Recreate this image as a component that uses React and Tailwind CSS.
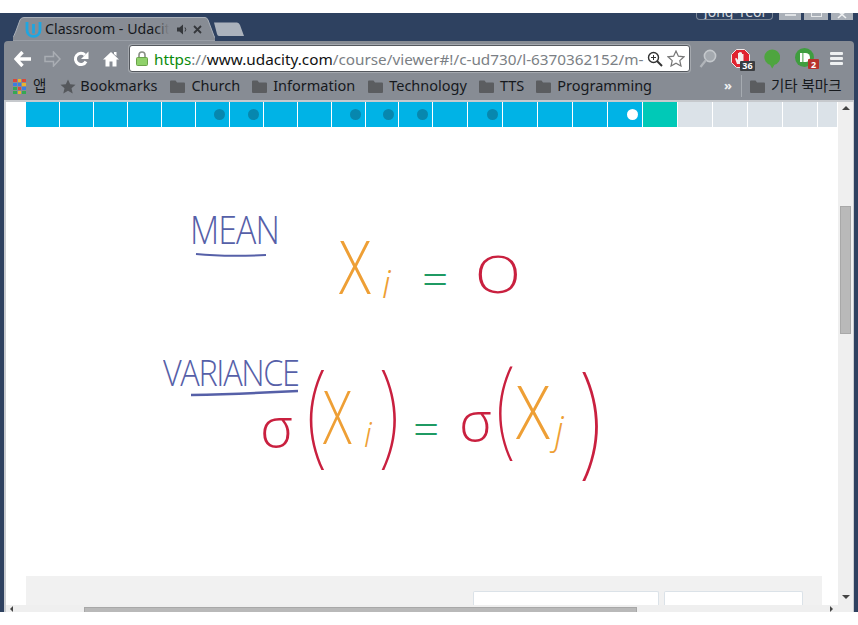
import React from "react";

const UI_FONT = "font-['Noto_Sans','Noto_Sans_CJK_KR',sans-serif]";

// progress bar across the top of the classroom page
const SEGMENTS = [
  { w: 34 }, { w: 34 }, { w: 34 }, { w: 34 }, { w: 34 },
  { w: 34, dot: "dark" }, { w: 34, dot: "dark" }, { w: 34 }, { w: 34 },
  { w: 34, dot: "dark" }, { w: 34, dot: "dark" }, { w: 34, dot: "dark" },
  { w: 35 }, { w: 35, dot: "dark" }, { w: 35 }, { w: 35 }, { w: 35 },
  { w: 35, dot: "white" }, { w: 35, color: "teal" },
  { w: 35, color: "gray" }, { w: 35, color: "gray" }, { w: 35, color: "gray" }, { w: 35, color: "gray" }, { w: 20, color: "gray" },
];

function Folder() {
  return (
    <svg width="15" height="13" viewBox="0 0 15 13" className="shrink-0">
      <path d="M0 1.5 Q0 .5 1 .5 H5.5 L7 2.5 H14 Q15 2.5 15 3.5 V12 Q15 13 14 13 H1 Q0 13 0 12 Z" fill="#5b5d60" />
    </svg>
  );
}

function BookmarkFolder({ label, className }) {
  return (
    <div className={`flex items-center ${className}`}>
      <Folder />
      <span className="ml-[6px] text-[14.5px] text-[#16191d] whitespace-nowrap">{label}</span>
    </div>
  );
}

function AppsGrid() {
  const colors = ["#d9483b", "#e8b32e", "#d9483b", "#3b7de0", "#3b7de0", "#e8b32e", "#35a853", "#d9483b", "#3b7de0", "#35a853", "#e8b32e", "#35a853"];
  return (
    <div className="grid grid-cols-3 gap-[1px] w-[13px] shrink-0">
      {colors.map((c, i) => (
        <div key={i} className="h-[3px] bg-[var(--c)]" style={{ "--c": c }} />
      ))}
    </div>
  );
}

function TabStrip() {
  return (
    <div className="flex h-[28px] shrink-0">
      <div className="relative ml-[13px] mt-[4px] h-[24px] w-[202px] shrink-0">
        <svg width="202" height="24" viewBox="0 0 202 24" className="absolute left-0 top-0">
          <path d="M-9 24 Q0 24 3 14 L7 3 Q8 .5 11 .5 H192 Q194 .5 195 3 L201 19 Q203 24 208 24 Z" fill="#878c94" stroke="#aab0b8" />
        </svg>
        <div className="relative flex items-center h-full pl-[12px]">
          <svg width="17" height="17" viewBox="0 0 17 17" className="shrink-0">
            <path d="M2 1 V9 C2 17.5 15 17.5 15 9 V1 M8.5 12.5 V3" fill="none" stroke="#1fa6e0" strokeWidth="2.8" />
          </svg>
          <div className="relative ml-[3px] w-[124px] overflow-hidden text-[14.2px] text-[#15181c] whitespace-nowrap leading-[20px]">
            Classroom - Udacity
            <div className="absolute right-0 top-0 h-full w-[14px] bg-gradient-to-r from-transparent to-[#878c94]" />
          </div>
          <svg width="11" height="11" viewBox="0 0 11 11" className="ml-[8px] shrink-0">
            <path d="M0 3.5 H2.5 L6 .5 V10.5 L2.5 7.5 H0 Z" fill="#34373b" />
            <path d="M8 3.5 Q9.5 5.5 8 7.5" stroke="#34373b" fill="none" />
          </svg>
          <svg width="9" height="9" viewBox="0 0 9 9" className="ml-[5px] shrink-0">
            <path d="M1 1 L8 8 M8 1 L1 8" stroke="#34373b" strokeWidth="1.8" />
          </svg>
        </div>
      </div>
      <svg width="32" height="14" viewBox="0 0 32 14" className="mt-[9px] -ml-[2px] shrink-0">
        <path d="M1 .5 H24 Q26 .5 27 3 L31 14 H6 Q4.5 14 4 12 Z" fill="#abb2bc" />
      </svg>
      <div className="ml-auto flex h-[7px] items-start gap-[3px] pr-[5px]">
        <div className="mr-[3px] h-[7px] w-[77px] overflow-hidden rounded-b-[4px] border border-t-0 border-[#7c8796] text-center text-[14px] leading-[14px] text-[#d5d9de]">
          <div className="-mt-[8px] h-[14px]">Jong-Yeol</div>
        </div>
        <div className="h-[7px] w-[22px] bg-[#aab0b8] flex justify-center">
          <div className="h-[2px] w-[11px] mt-[1px] bg-[#dfe2e5]" />
        </div>
        <div className="h-[7px] w-[24px] bg-[#aab0b8] flex justify-center">
          <div className="h-[4px] w-[11px] border-x border-b border-[#e6e8ea]" />
        </div>
        <div className="h-[7px] w-[22px] bg-[#aab0b8] flex justify-center overflow-hidden">
          <svg width="10" height="7" viewBox="0 0 10 7">
            <path d="M1 -2 L9 5 M9 -2 L1 5" stroke="#eef0f1" strokeWidth="1.6" />
          </svg>
        </div>
      </div>
    </div>
  );
}

function NavIcons() {
  return (
    <div className="flex w-[125px] shrink-0 items-center pl-[10px] gap-[9px]">
      <svg width="18" height="16" viewBox="0 0 18 16">
        <path d="M8.5 1 L2 8 L8.5 15 M2.5 8 H17" fill="none" stroke="#fff" strokeWidth="3.4" />
      </svg>
      <svg width="18" height="16" viewBox="0 0 18 16" className="ml-[3px]">
        <path d="M9.5 1 L16 8 L9.5 15 L9.5 10.5 H1 V5.5 H9.5 Z" fill="none" stroke="#a9adb3" strokeWidth="1.5" />
      </svg>
      <svg width="16" height="16" viewBox="0 0 16 16" className="ml-[2px]">
        <path d="M13 10.5 A5.6 5.6 0 1 1 12 4" fill="none" stroke="#fff" strokeWidth="3" />
        <path d="M15.5 .5 V8 H8 Z" fill="#fff" />
      </svg>
      <svg width="16" height="16" viewBox="0 0 16 16" className="ml-[5px]">
        <path d="M8 1 L16 8.5 H13.5 V15.5 H9.5 V10.5 H6.5 V15.5 H2.5 V8.5 H0 Z M11 1 H13.5 V5 L11 3 Z" fill="#fff" />
      </svg>
    </div>
  );
}

function Omnibox() {
  return (
    <div className="flex h-[27px] w-[561px] shrink-0 items-center rounded-[3px] border border-[#54585e] bg-white pl-[6px] shadow-[0_0_0_1px_#a5a9af]">
      <svg width="12" height="15" viewBox="0 0 12 15" className="shrink-0">
        <path d="M3 7 V4 A3 3 0 0 1 9 4 V7" fill="none" stroke="#8a8f86" strokeWidth="1.6" />
        <rect x=".5" y="6.5" width="11" height="8" rx="1" fill="#8fd16a" stroke="#6aa24a" />
      </svg>
      <div className="ml-[6px] w-[491px] overflow-hidden whitespace-nowrap text-[15.3px] leading-[22px]">
        <span className="text-[#0b8a0b]">https</span>
        <span className="text-[#7b7f85]">://</span>
        <span className="text-[#111]">www.udacity.com</span>
        <span className="text-[#7b7f85]">/course/viewer#!/c-ud730/l-6370362152/m-</span>
      </div>
      <svg width="16" height="16" viewBox="0 0 16 16" className="ml-[2px] shrink-0">
        <circle cx="6.5" cy="6.5" r="5" fill="none" stroke="#333" strokeWidth="1.4" />
        <path d="M10 10 L15 15" stroke="#333" strokeWidth="2" />
        <path d="M4 6.5 H9 M6.5 4 V9" stroke="#333" />
      </svg>
      <svg width="18" height="17" viewBox="0 0 18 17" className="ml-[4px] shrink-0">
        <path d="M9 1 L11.4 6.2 L17 6.8 L12.8 10.6 L14 16 L9 13.2 L4 16 L5.2 10.6 L1 6.8 L6.6 6.2 Z" fill="#fff" stroke="#777" strokeWidth="1.2" />
      </svg>
    </div>
  );
}

function ExtensionIcons() {
  return (
    <div className="flex flex-1 items-center">
      <svg width="18" height="20" viewBox="0 0 18 20" className="ml-[9px] shrink-0">
        <circle cx="11" cy="7" r="5.6" fill="#a4a9af" stroke="#c4c8cc" strokeWidth="1.6" />
        <path d="M7 11 L1.5 18" stroke="#b1b5ba" strokeWidth="2.2" />
      </svg>
      <div className="relative ml-[14px] h-[20px] w-[20px] shrink-0">
        <svg width="19" height="19" viewBox="0 0 19 19" className="absolute left-0 top-0">
          <path d="M5.5 .5 H13.5 L18.5 5.5 V13.5 L13.5 18.5 H5.5 L.5 13.5 V5.5 Z" fill="#e02330" stroke="#f0e8e8" />
          <path d="M6 15 L4 9.5 L5.5 9 L7 11 V4 H8.3 V9 V3 H9.7 V9 V3.5 H11 V9 V5 H12.5 V12 Q12.5 15 10 15 Z" fill="#f4eeee" />
        </svg>
        <div className="absolute left-[9px] top-[12px] flex h-[10px] w-[15px] items-center justify-center rounded-[1px] bg-[#3a3d41] text-[9px] font-bold leading-none text-white">36</div>
      </div>
      <svg width="16" height="20" viewBox="0 0 16 20" className="ml-[13px] shrink-0">
        <path d="M8 .5 A7.8 7.8 0 0 1 10.5 15.8 L8.2 19.5 L6 15.8 A7.8 7.8 0 0 1 8 .5 Z" fill="#4ea53f" />
      </svg>
      <div className="relative ml-[15px] h-[21px] w-[23px] shrink-0">
        <svg width="19" height="19" viewBox="0 0 19 19" className="absolute left-0 top-0">
          <circle cx="9.5" cy="9.5" r="9.5" fill="#3f9d3f" />
          <rect x="5" y="5" width="2.4" height="9" fill="#fff" />
          <path d="M8.4 5 H10.5 A4.5 4.5 0 0 1 10.5 14 H8.4 Z" fill="#fff" />
        </svg>
        <div className="absolute left-[13px] top-[11px] flex h-[10px] w-[11px] items-center justify-center rounded-[1px] bg-[#b7322c] text-[9px] font-bold leading-none text-white">2</div>
      </div>
      <div className="ml-[12px] flex w-[13px] shrink-0 flex-col gap-[2px]">
        <div className="h-[3px] rounded-[1px] bg-[#eef0f1]" />
        <div className="h-[3px] rounded-[1px] bg-[#eef0f1]" />
        <div className="h-[3px] rounded-[1px] bg-[#eef0f1]" />
      </div>
    </div>
  );
}

function BookmarksBar() {
  return (
    <div className="flex h-[28px] items-center">
      <div className="ml-[9px]"><AppsGrid /></div>
      <span className="ml-[7px] text-[14.5px] text-[#16191d]">앱</span>
      <svg width="16" height="15" viewBox="0 0 16 15" className="ml-[14px] shrink-0">
        <path d="M8 .5 L10.2 5.3 L15.5 5.8 L11.5 9.3 L12.7 14.5 L8 11.8 L3.3 14.5 L4.5 9.3 L.5 5.8 L5.8 5.3 Z" fill="#55585c" />
      </svg>
      <span className="ml-[4px] text-[14.5px] text-[#16191d]">Bookmarks</span>
      <BookmarkFolder label="Church" className="ml-[13px]" />
      <BookmarkFolder label="Information" className="ml-[12px]" />
      <BookmarkFolder label="Technology" className="ml-[13px]" />
      <BookmarkFolder label="TTS" className="ml-[12px]" />
      <BookmarkFolder label="Programming" className="ml-[12px]" />
      <span className="ml-[72px] text-[13px] font-bold text-[#eef0f1]">»</span>
      <div className="ml-[9px] h-[22px] w-px bg-[#a6abb1]" />
      <BookmarkFolder label="기타 북마크" className="ml-[8px]" />
    </div>
  );
}

// the hand-written lesson slide
function Slide() {
  return (
    <div className="relative flex-1 overflow-hidden font-['Open_Sans',sans-serif] font-light">
      <span className="absolute left-[184px] top-[83px] text-[38px] leading-none tracking-[-1px] text-[#5660a8] scale-x-[0.89] origin-left">MEAN</span>
      <svg width="80" height="6" viewBox="0 0 80 6" className="absolute left-[189px] top-[125px]">
        <path d="M1 2 Q30 5 71 3" fill="none" stroke="#5660a8" strokeWidth="2" />
      </svg>
      <span className="absolute left-[157px] top-[228px] text-[36px] leading-none tracking-[-1.5px] text-[#5660a8] scale-x-[0.9] origin-left">VARIANCE</span>
      <svg width="112" height="8" viewBox="0 0 112 8" className="absolute left-[184px] top-[262px]">
        <path d="M1 6 Q50 5 108 2" fill="none" stroke="#5660a8" strokeWidth="2.4" />
      </svg>

      <span className="absolute left-[333px] top-[102px] text-[74px] leading-none text-[#ee9f35] scale-x-[0.8] origin-left">X</span>
      <span className="absolute left-[376px] top-[137px] text-[38px] leading-none italic text-[#ee9f35]">i</span>
      <span className="absolute left-[416px] top-[128px] text-[46px] leading-none text-[#1f9a63]">=</span>
      <span className="absolute left-[469px] top-[120px] text-[52px] leading-none text-[#c9203f] scale-x-[1.15] origin-left">O</span>

      <span className="absolute left-[254px] top-[270px] text-[56px] leading-none text-[#c9203f]">σ</span>
      <span className="absolute left-[291px] top-[233px] font-['Inter',sans-serif] font-thin text-[110px] leading-none text-[#c9203f]">(</span>
      <span className="absolute left-[317px] top-[252px] text-[74px] leading-none text-[#ee9f35] scale-x-[0.72] origin-left">X</span>
      <span className="absolute left-[358px] top-[290px] text-[34px] leading-none italic text-[#ee9f35]">i</span>
      <span className="absolute left-[368px] top-[233px] font-['Inter',sans-serif] font-thin text-[110px] leading-none text-[#c9203f]">)</span>
      <span className="absolute left-[407px] top-[278px] text-[46px] leading-none text-[#1f9a63]">=</span>
      <span className="absolute left-[453px] top-[264px] text-[56px] leading-none text-[#c9203f]">σ</span>
      <span className="absolute left-[481px] top-[230px] font-['Inter',sans-serif] font-thin text-[104px] leading-none text-[#c9203f]">(</span>
      <span className="absolute left-[510px] top-[247px] text-[74px] leading-none text-[#ee9f35] scale-x-[0.85] origin-left">X</span>
      <span className="absolute left-[549px] top-[283px] text-[38px] leading-none italic text-[#ee9f35]">j</span>
      <span className="absolute left-[568px] top-[235px] font-['Inter',sans-serif] font-thin text-[120px] leading-none text-[#c9203f]">)</span>
    </div>
  );
}

function Page() {
  return (
    <div className="flex flex-1 min-h-0 flex-col border-l-2 border-r border-l-[#c9ccd0] border-r-[#c9ccd0] bg-white">
      <div className="flex flex-1 min-h-0">
        <div className="flex w-[832px] shrink-0 flex-col">
          <div className="ml-[20px] flex h-[25px] shrink-0">
            {SEGMENTS.map((s, i) => (
              <div
                key={i}
                style={{ width: s.w }}
                className={`flex items-center justify-end border-r border-white pr-[4px] ${s.color === "teal" ? "bg-[#00c9b7]" : s.color === "gray" ? "bg-[#dbe2e8]" : "bg-[#00b3e6]"}`}
              >
                {s.dot === "dark" && <div className="h-[11px] w-[11px] rounded-full bg-[#0787ae]" />}
                {s.dot === "white" && <div className="h-[11px] w-[11px] rounded-full bg-white" />}
              </div>
            ))}
          </div>
          <Slide />
          <div className="ml-[20px] mr-[16px] flex h-[29px] shrink-0 gap-[5px] bg-[#f1f1f1] pl-[447px] pt-[15px]">
            <div className="h-[14px] w-[186px] rounded-t-[2px] border border-b-0 border-[#dbe2e8] bg-white" />
            <div className="h-[14px] w-[139px] rounded-t-[2px] border border-b-0 border-[#dbe2e8] bg-white" />
          </div>
        </div>
        <div className="flex w-[15px] shrink-0 flex-col items-center bg-[#efefef] pt-[4px]">
          <div className="h-0 w-0 border-x-[4px] border-b-[4px] border-x-transparent border-b-[#444]" />
          <div className="mt-[96px] h-[128px] w-[11px] border border-[#a8a8a8] bg-[#b9b9b9]" />
          <div className="mt-auto mb-[6px] h-0 w-0 border-x-[4px] border-t-[4px] border-x-transparent border-t-[#444]" />
        </div>
      </div>
      <div className="flex h-[7px] shrink-0 items-end bg-[#efefef]">
        <div className="ml-[4px] h-0 w-0 border-y-[3px] border-r-[3px] border-y-transparent border-r-[#444]" />
        <div className="ml-[71px] h-[5px] w-[553px] border border-b-0 border-[#a8a8a8] bg-[#b9b9b9]" />
        <div className="ml-[193px] h-0 w-0 border-y-[3px] border-l-[3px] border-y-transparent border-l-[#444]" />
      </div>
    </div>
  );
}

export default function App() {
  return (
    <div className={`flex h-[625px] w-[858px] flex-col overflow-hidden bg-white ${UI_FONT}`}>
      <div className="flex h-[599px] mt-[13px] flex-col bg-[#2e4160] px-[4px]">
        <div className="-mx-[4px]"><TabStrip /></div>
        <div className="flex h-[61px] shrink-0 flex-col rounded-t-[4px] border-b-2 border-[#c6c9cd] bg-[#878c94]">
          <div className="flex h-[31px] items-center pt-[4px]">
            <NavIcons />
            <Omnibox />
            <ExtensionIcons />
          </div>
          <BookmarksBar />
        </div>
        <Page />
      </div>
    </div>
  );
}
